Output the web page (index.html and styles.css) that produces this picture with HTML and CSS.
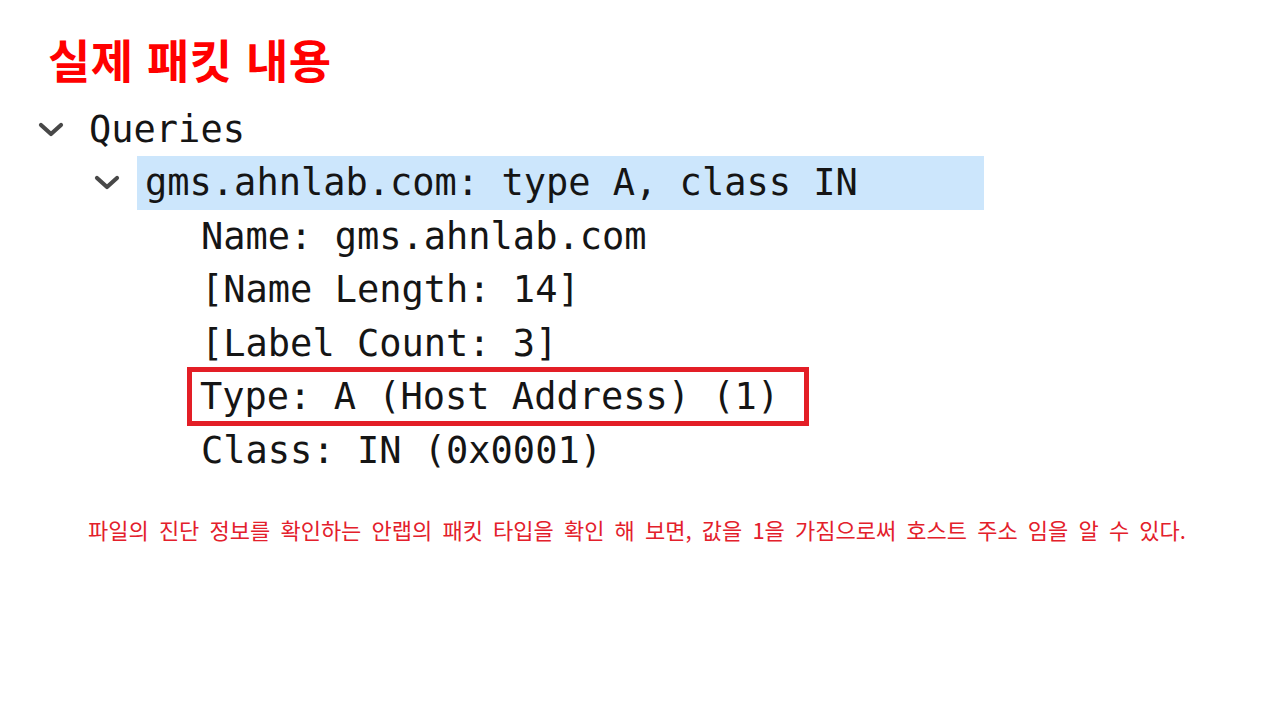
FILE: index.html
```html
<!DOCTYPE html>
<html lang="ko">
<head>
<meta charset="utf-8">
<title>실제 패킷 내용</title>
<link rel="stylesheet" href="styles.css">
</head>
<body>
<main class="slide">
  <h1 class="title">실제 패킷 내용</h1>
  <div class="tree">
    <div class="row lvl0">
      <svg class="chev" viewBox="0 0 26 16" width="26" height="16"><path d="M3 3 L13 12 L23 3" fill="none" stroke="#484848" stroke-width="4.2" stroke-linecap="round" stroke-linejoin="round"/></svg>
      <span class="label">Queries</span>
    </div>
    <div class="row lvl1">
      <svg class="chev" viewBox="0 0 26 16" width="26" height="16"><path d="M3 3 L13 12 L23 3" fill="none" stroke="#484848" stroke-width="4.2" stroke-linecap="round" stroke-linejoin="round"/></svg>
      <span class="label selected">gms.ahnlab.com: type A, class IN</span>
    </div>
    <div class="row lvl2"><span class="label">Name: gms.ahnlab.com</span></div>
    <div class="row lvl2"><span class="label">[Name Length: 14]</span></div>
    <div class="row lvl2"><span class="label">[Label Count: 3]</span></div>
    <div class="row lvl2 boxed"><span class="label">Type: A (Host Address) (1)</span></div>
    <div class="row lvl2"><span class="label">Class: IN (0x0001)</span></div>
  </div>
  <p class="caption">파일의 진단 정보를 확인하는 안랩의 패킷 타입을 확인 해 보면, 값을 1을 가짐으로써 호스트 주소 임을 알 수 있다.</p>
</main>
</body>
</html>
```

FILE: styles.css
```css
html, body {
  margin: 0;
  padding: 0;
  background: #ffffff;
}

.slide {
  width: 1280px;
  height: 720px;
  display: flex;
  flex-direction: column;
  overflow: hidden;
}

.title {
  margin: 28px 0 0 48px;
  font-family: "Noto Sans CJK KR", "Noto Sans", sans-serif;
  font-weight: 700;
  font-size: 46px;
  line-height: 60px;
  color: #ff0000;
  letter-spacing: 0.5px;
}

.tree {
  margin-top: 15px;
  display: flex;
  flex-direction: column;
  font-family: "DejaVu Sans Mono", "Liberation Mono", monospace;
  font-size: 37px;
  color: #151515;
}

.row {
  height: 53.4px;
  display: flex;
  align-items: center;
  white-space: pre;
}

.chev {
  flex: none;
  display: block;
}

.lvl0 {
  padding-left: 38px;
}
.lvl0 .chev {
  margin-right: 25px;
}

.lvl1 {
  padding-left: 94px;
}
.lvl1 .chev {
  margin-right: 17px;
}
.lvl1 .selected {
  background: #cce6fc;
  width: 839px;
  height: 54px;
  line-height: 54px;
  padding-left: 8px;
}

.lvl2 {
  padding-left: 201px;
}

.boxed {
  margin: -3px 0 -3px 187px;
  padding-left: 8px;
  width: 622px;
  height: 59.4px;
  box-sizing: border-box;
  border: 5px solid #e31e26;
}

.caption {
  margin: 37px 0 0 88px;
  font-family: "Noto Sans CJK KR", "Noto Sans", sans-serif;
  font-size: 22px;
  line-height: 30px;
  color: #e3202b;
  word-spacing: 4px;
}
```
